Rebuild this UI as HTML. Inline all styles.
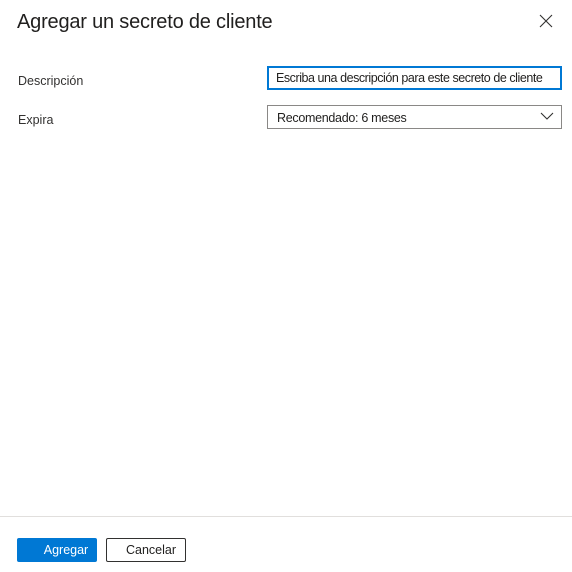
<!DOCTYPE html>
<html><head><style>
body{margin:0;width:572px;height:572px;background:#fff;font-family:"Liberation Sans",Arial,sans-serif;color:#323130;position:relative;overflow:hidden}
.t{position:absolute;left:17px;top:11px;font-size:20px;color:#201f1e;letter-spacing:-0.2px}
.x{position:absolute;left:539px;top:14px}
.l{position:absolute;left:18px;font-size:12.5px}
.in{position:absolute;left:267px;width:295px;height:24px;box-sizing:border-box;font-size:12.5px;white-space:nowrap;overflow:hidden}
.b{position:absolute;top:538px;height:24px;box-sizing:border-box;font-size:12.5px;line-height:24px;text-align:center;border-radius:2px}
</style></head><body>
<div class="t">Agregar un secreto de cliente</div>
<svg class="x" width="14" height="14" viewBox="0 0 14 14"><path d="M1 1L13 13M13 1L1 13" stroke="#323130" stroke-width="1.1"/></svg>
<div class="l" style="top:74px">Descripción</div>
<div class="in" style="top:66px;border:2px solid #0078d4;color:#201f1e;padding-left:7px;line-height:20px;letter-spacing:-0.45px">Escriba una descripción para este secreto de cliente</div>
<div class="l" style="top:113px">Expira</div>
<div class="in" style="top:105px;border:1px solid #8a8886;line-height:24px;color:#201f1e;padding-left:9px;letter-spacing:-0.3px">Recomendado: 6 meses</div>
<svg style="position:absolute;left:540px;top:112px" width="14" height="9" viewBox="0 0 14 9"><path d="M1 1L7 7L13 1" fill="none" stroke="#323130" stroke-width="1.1"/></svg>
<div style="position:absolute;left:0;top:516px;width:572px;height:1px;background:#e1dfdd"></div>
<div class="b" style="left:17px;width:80px;background:#0078d4;color:#fff;padding-left:18px">Agregar</div>
<div class="b" style="left:106px;width:80px;border:1px solid #323130;color:#201f1e;padding-left:10px;line-height:22px">Cancelar</div>
</body></html>
